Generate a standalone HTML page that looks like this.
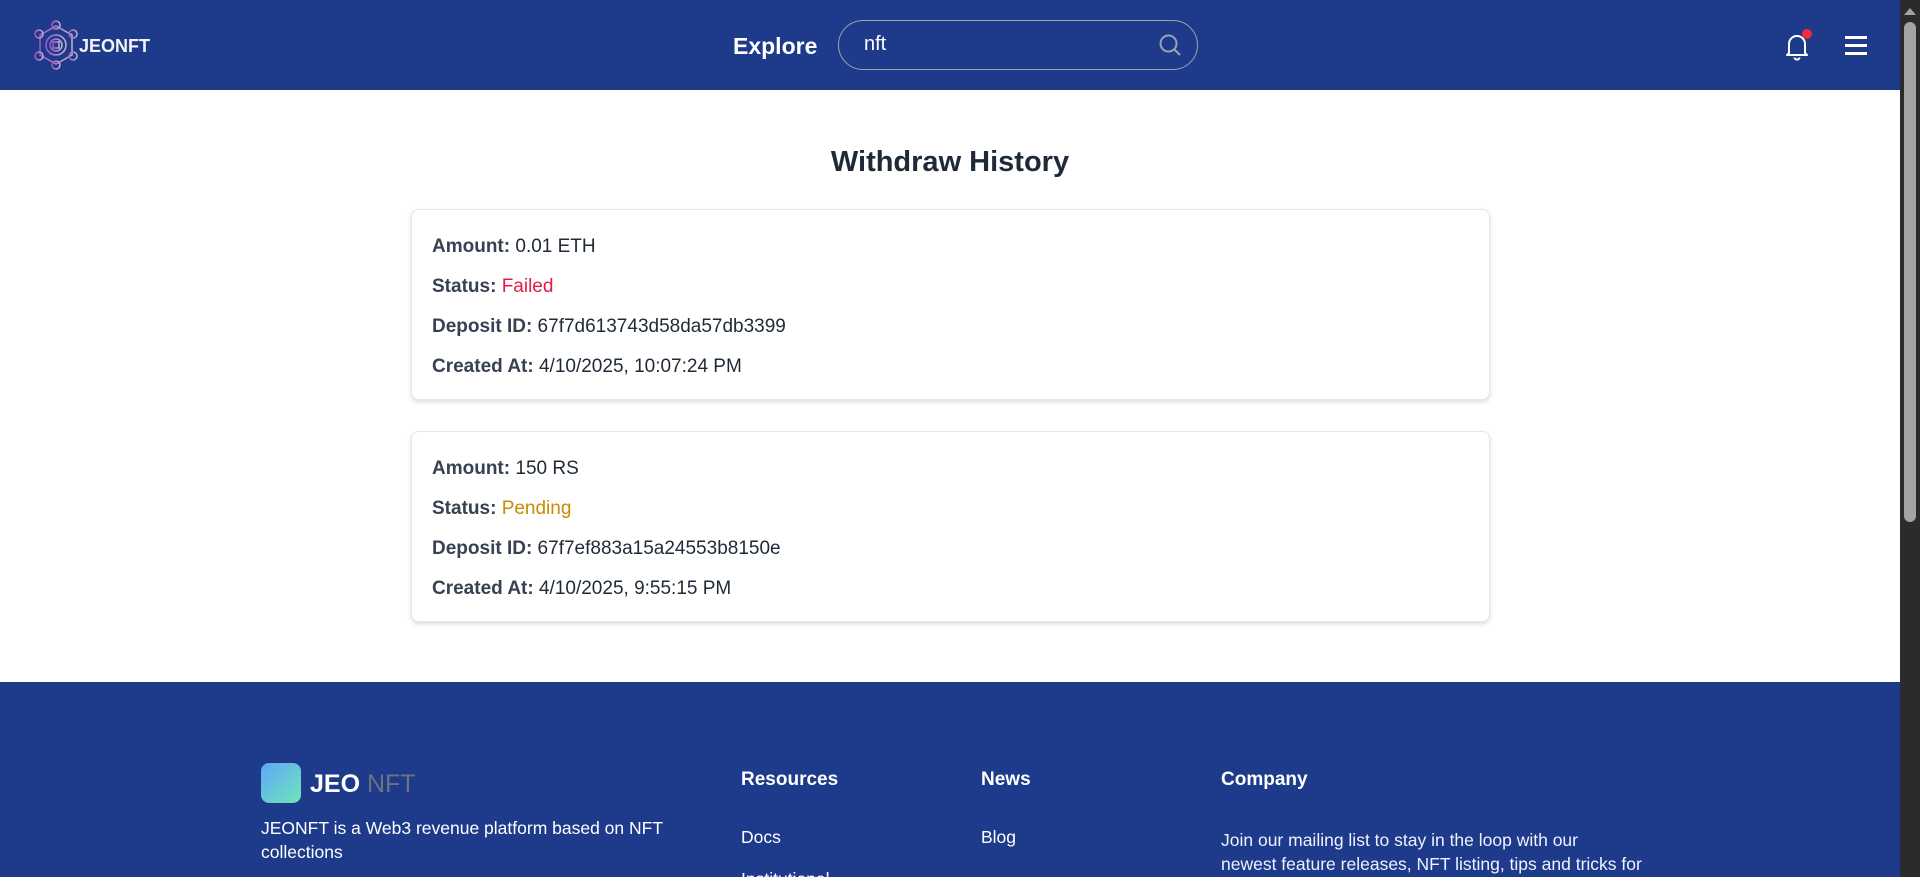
<!DOCTYPE html>
<html><head><meta charset="utf-8"><style>
*{margin:0;padding:0;box-sizing:border-box}
html,body{width:1920px;height:877px;overflow:hidden;background:#fff;font-family:"Liberation Sans",sans-serif}
.hdr{position:absolute;left:0;top:0;width:1900px;height:90px;background:#1e3a8a}
.sb{position:absolute;right:0;top:0;width:20px;height:877px;background:#2b2b2b}
.sb .th{position:absolute;left:4px;top:22px;width:12px;height:500px;background:#a3a3a3;border-radius:6px}
.sb .ar{position:absolute;left:4px;top:8px;width:0;height:0;border-left:6px solid transparent;border-right:6px solid transparent;border-bottom:7px solid #a3a3a3}
.t{position:absolute;white-space:nowrap}
.card{position:absolute;left:411px;width:1079px;height:191px;border:1px solid #e5e7eb;border-radius:8px;box-shadow:0 2px 5px rgba(0,0,0,.15);background:#fff}
.card .l{position:absolute;left:20px;font-size:19px;color:#1f2937;white-space:nowrap}
.card b{color:#374151;font-weight:bold}
.ft{position:absolute;left:0;top:682px;width:1900px;height:195px;background:#1e3a8a;color:#fff}
</style></head><body>
<div class="hdr">
 <svg style="position:absolute;left:32px;top:20px" width="48" height="50" viewBox="0 0 48 50">
  <defs><linearGradient id="g" x1="0" x2="1"><stop offset="0" stop-color="#a855c7"/><stop offset="1" stop-color="#c4b5c8"/></linearGradient></defs>
  <g fill="none" stroke="url(#g)" stroke-width="1.5">
   <polygon points="24,6 40,15 40,35 24,44 8,35 8,15"/>
   <circle cx="24" cy="25" r="10"/><circle cx="24" cy="25" r="6"/><rect x="21" y="22" width="6" height="6"/>
   <circle cx="24" cy="5" r="4"/><circle cx="41" cy="14" r="4"/><circle cx="41" cy="36" r="4"/><circle cx="24" cy="45" r="4"/><circle cx="7" cy="36" r="4"/><circle cx="7" cy="14" r="4"/>
  </g></svg>
 <div class="t" style="left:79px;top:36px;font-size:18px;font-weight:bold;color:#f3f4f6">JEONFT</div>
 <div class="t" style="left:733px;top:33px;font-size:23px;font-weight:bold;color:#fff">Explore</div>
 <div style="position:absolute;left:838px;top:20px;width:360px;height:50px;border:1px solid #9ca3af;border-radius:25px"></div>
 <div class="t" style="left:864px;top:33px;font-size:20px;color:#fff">nft</div>
 <svg style="position:absolute;left:1158px;top:33px" width="24" height="24" viewBox="0 0 24 24" fill="none" stroke="#9ca3af" stroke-width="2"><circle cx="10.5" cy="10.5" r="8"/><path d="M16.5 16.5L22 22"/></svg>
 <svg style="position:absolute;left:1782px;top:29px" width="30" height="32" viewBox="0 0 30 32" fill="none" stroke="#fff" stroke-width="2" stroke-linejoin="round"><path d="M7 24V15a8 8 0 0 1 16 0v9l2 2H5z"/><path d="M12.5 28.5a2.5 2 0 0 0 5 0"/></svg>
 <div style="position:absolute;left:1802px;top:29px;width:10px;height:10px;border-radius:50%;background:#ef2b3f"></div>
 <div style="position:absolute;left:1845px;top:36px;width:22px;height:2.5px;background:#fff;box-shadow:0 8px 0 #fff,0 16px 0 #fff"></div>
</div>
<div class="t" style="left:0;width:1900px;text-align:center;top:146px;font-size:29px;font-weight:bold;color:#1f2937">Withdraw History</div>
<div class="card" style="top:209px">
 <div class="l" style="top:26px"><b>Amount:</b> 0.01 ETH</div>
 <div class="l" style="top:66px"><b>Status:</b> <span style="color:#e11d48">Failed</span></div>
 <div class="l" style="top:106px"><b>Deposit ID:</b> 67f7d613743d58da57db3399</div>
 <div class="l" style="top:146px"><b>Created At:</b> 4/10/2025, 10:07:24 PM</div>
</div>
<div class="card" style="top:431px">
 <div class="l" style="top:26px"><b>Amount:</b> 150 RS</div>
 <div class="l" style="top:66px"><b>Status:</b> <span style="color:#ca8a04">Pending</span></div>
 <div class="l" style="top:106px"><b>Deposit ID:</b> 67f7ef883a15a24553b8150e</div>
 <div class="l" style="top:146px"><b>Created At:</b> 4/10/2025, 9:55:15 PM</div>
</div>
<div class="ft">
 <div style="position:absolute;left:261px;top:81px;width:40px;height:40px;border-radius:8px;background:linear-gradient(135deg,#60a5fa,#6ee7b7)"></div>
 <div class="t" style="left:310px;top:88px;font-size:25px;font-weight:bold"><span style="color:#fff">JEO</span> <span style="color:#6b7280;font-weight:normal">NFT</span></div>
 <div class="t" style="left:261px;top:134px;font-size:17.5px;line-height:24px">JEONFT is a Web3 revenue platform based on NFT<br>collections</div>
 <div class="t" style="left:741px;top:87px;font-size:19px;font-weight:bold">Resources</div>
 <div class="t" style="left:981px;top:87px;font-size:19px;font-weight:bold">News</div>
 <div class="t" style="left:1221px;top:87px;font-size:19px;font-weight:bold">Company</div>
 <div class="t" style="left:741px;top:145px;font-size:17.5px">Docs</div>
 <div class="t" style="left:741px;top:187px;font-size:17.5px">Institutional</div>
 <div class="t" style="left:981px;top:145px;font-size:17.5px">Blog</div>
 <div class="t" style="left:1221px;top:146px;font-size:17.5px;line-height:24px;color:#eef2ff">Join our mailing list to stay in the loop with our<br>newest feature releases, NFT listing, tips and tricks for</div>
</div>
<div class="sb"><div class="ar"></div><div class="th"></div></div>
</body></html>
